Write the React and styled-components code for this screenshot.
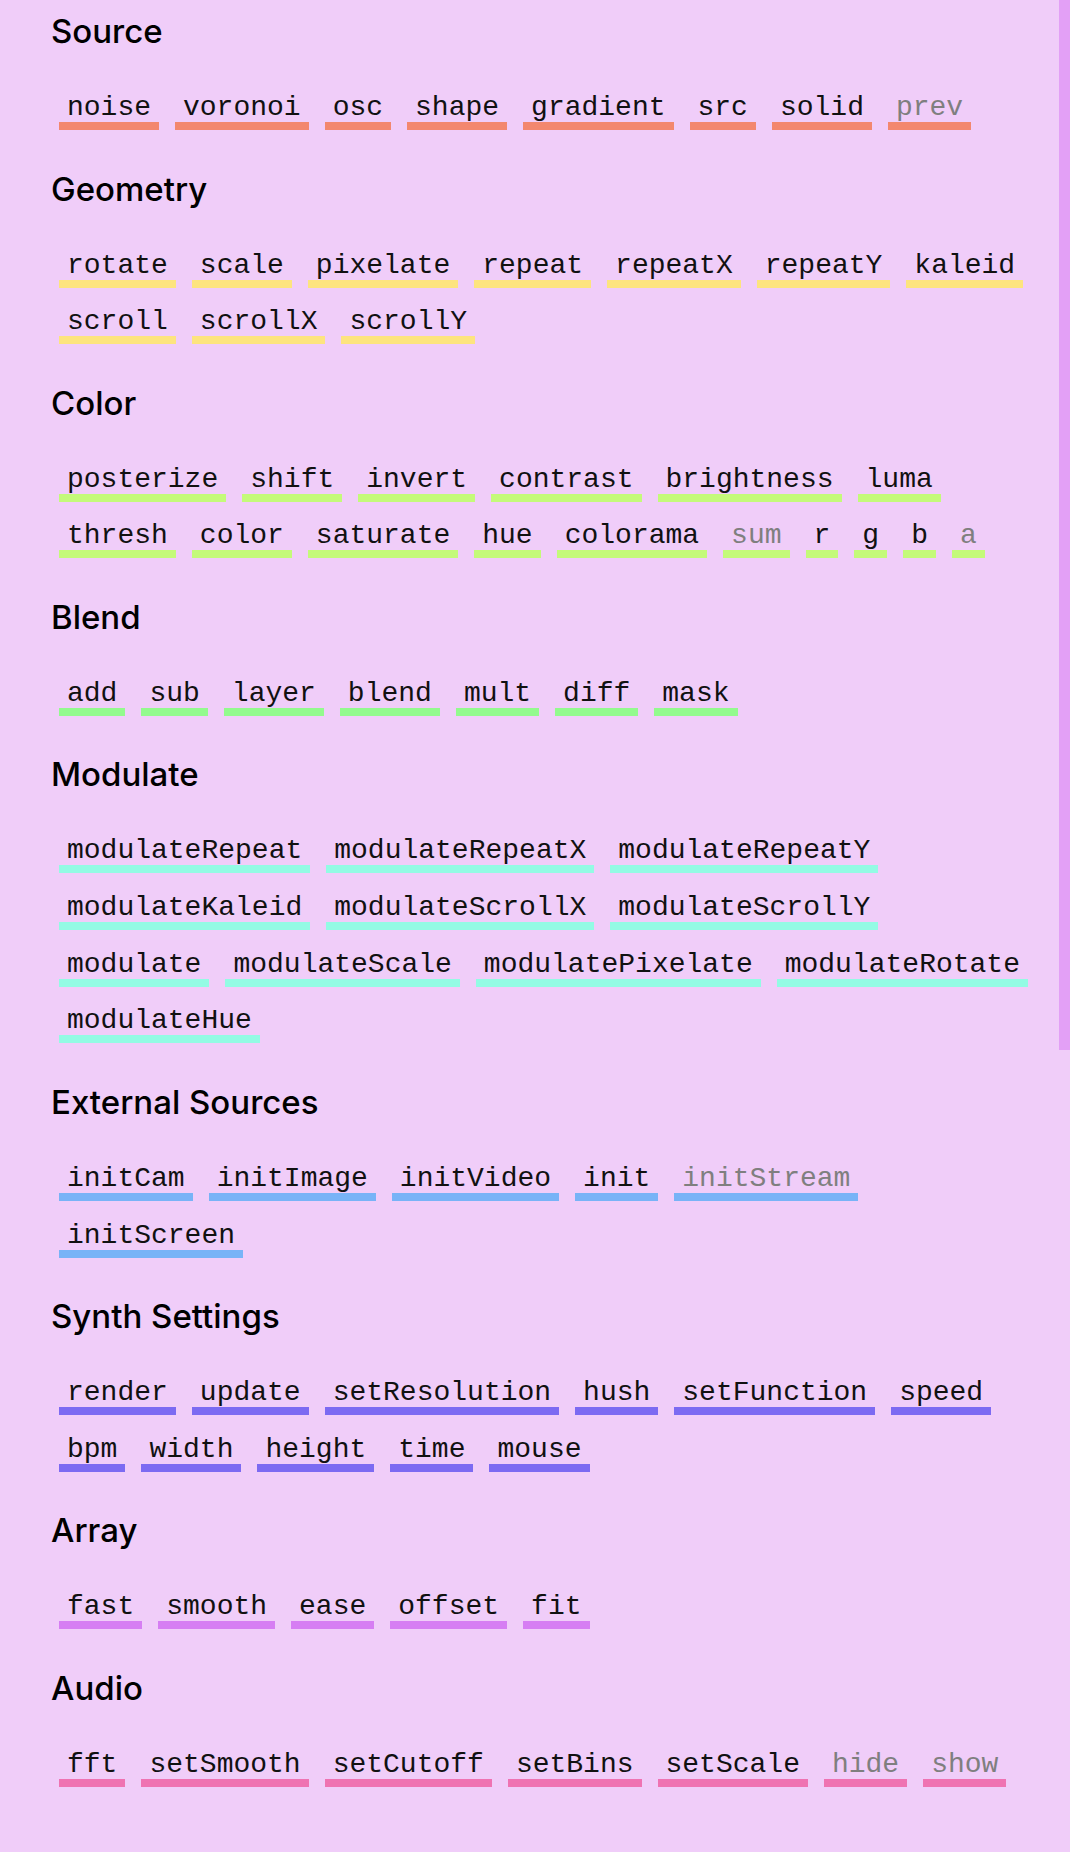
import React from "react";
import styled, { createGlobalStyle } from "styled-components";

const Global = createGlobalStyle`
  html, body { margin: 0; padding: 0; background: #f0cdf9; overflow: hidden; }
  * { box-sizing: border-box; }
`;

const Page = styled.div`
  position: relative;
  height: 100vh;
  width: 100vw;
  background: #f0cdf9;
`;

const ScrollThumb = styled.div`
  position: absolute;
  top: 0;
  right: 0;
  width: 11px;
  height: 1050px;
  background: #e3a0f6;
`;

const Content = styled.main`
  padding: 12px 33px 0 51px;
`;

const Section = styled.section`
  margin-bottom: 39.5px;
`;

const Heading = styled.h2`
  margin: 0;
  font-family: Inter, "Noto Sans", sans-serif;
  font-weight: 500;
  font-size: 33px;
  line-height: 38px;
  color: #000;
`;

const Row = styled.div`
  display: flex;
  flex-wrap: wrap;
  gap: 20.7px 16px;
  padding-left: 8px;
  margin-top: 44px;
`;

const Fn = styled.span`
  display: block;
  font-family: "Liberation Mono", "DejaVu Sans Mono", monospace;
  font-size: 28px;
  line-height: 28px;
  padding: 0 8px;
  color: ${(p) => (p.$muted ? "#7f7f7f" : "#111")};
  border-bottom: 8px solid ${(p) => p.$color};
  white-space: nowrap;
`;

const sections = [
  {
    title: "Source",
    color: "#f3876e",
    items: ["noise", "voronoi", "osc", "shape", "gradient", "src", "solid", "~prev"],
  },
  {
    title: "Geometry",
    color: "#fde47f",
    items: ["rotate", "scale", "pixelate", "repeat", "repeatX", "repeatY", "kaleid", "scroll", "scrollX", "scrollY"],
  },
  {
    title: "Color",
    color: "#c4fa7a",
    items: ["posterize", "shift", "invert", "contrast", "brightness", "luma", "thresh", "color", "saturate", "hue", "colorama", "~sum", "r", "g", "b", "~a"],
  },
  {
    title: "Blend",
    color: "#93fa8e",
    items: ["add", "sub", "layer", "blend", "mult", "diff", "mask"],
  },
  {
    title: "Modulate",
    color: "#93fbe4",
    items: ["modulateRepeat", "modulateRepeatX", "modulateRepeatY", "modulateKaleid", "modulateScrollX", "modulateScrollY", "modulate", "modulateScale", "modulatePixelate", "modulateRotate", "modulateHue"],
  },
  {
    title: "External Sources",
    color: "#78b3f7",
    items: ["initCam", "initImage", "initVideo", "init", "~initStream", "initScreen"],
  },
  {
    title: "Synth Settings",
    color: "#7c6af2",
    items: ["render", "update", "setResolution", "hush", "setFunction", "speed", "bpm", "width", "height", "time", "mouse"],
  },
  {
    title: "Array",
    color: "#d67ef3",
    items: ["fast", "smooth", "ease", "offset", "fit"],
  },
  {
    title: "Audio",
    color: "#ef73b2",
    items: ["fft", "setSmooth", "setCutoff", "setBins", "setScale", "~hide", "~show"],
  },
];

export default function App() {
  return (
    <>
      <Global />
      <Page>
        <Content>
          {sections.map((s) => (
            <Section key={s.title}>
              <Heading>{s.title}</Heading>
              <Row>
                {s.items.map((it) => {
                  const muted = it.startsWith("~");
                  const name = muted ? it.slice(1) : it;
                  return (
                    <Fn key={name} $color={s.color} $muted={muted}>
                      {name}
                    </Fn>
                  );
                })}
              </Row>
            </Section>
          ))}
        </Content>
        <ScrollThumb />
      </Page>
    </>
  );
}
